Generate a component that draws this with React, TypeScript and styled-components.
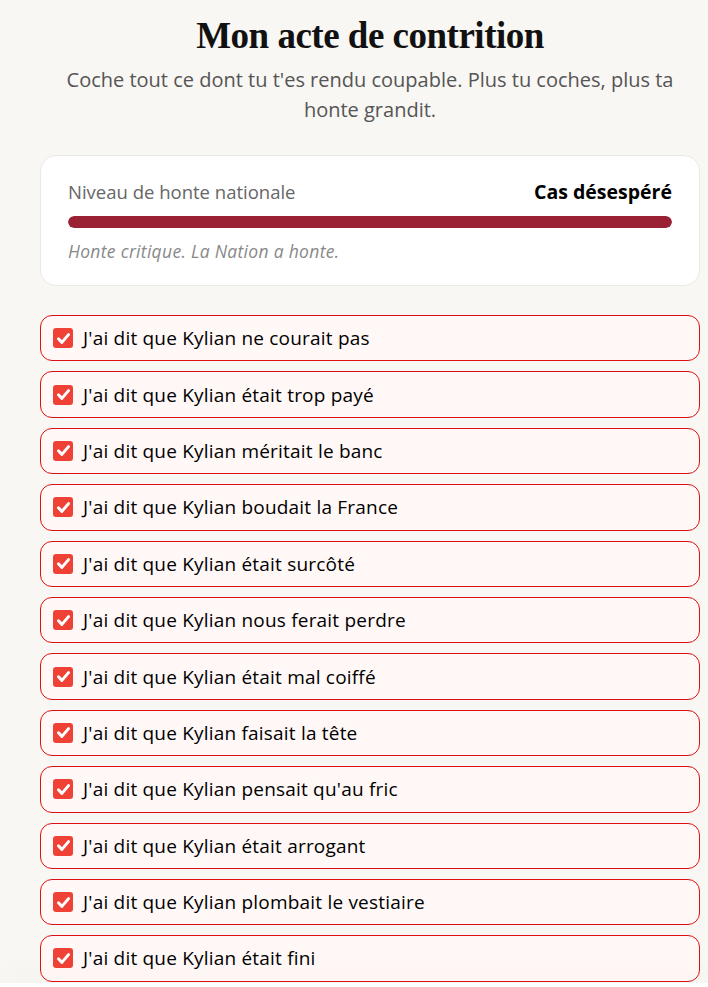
import React from "react";
import styled, { createGlobalStyle } from "styled-components";

const Global = createGlobalStyle`
  html, body { margin: 0; padding: 0; background: #f8f7f4; }
  body { font-family: "Open Sans", "Noto Sans", sans-serif; }
`;

const Page = styled.div`
  width: 660px;
  margin-left: 40px;
  padding-top: 14px;
  padding-bottom: 40px;
  display: flex;
  flex-direction: column;
`;

const Title = styled.h1`
  margin: 0;
  text-align: center;
  font-family: "Liberation Serif", "DejaVu Serif", serif;
  font-weight: 700;
  font-size: 37px;
  line-height: 44px;
  color: #111;
  letter-spacing: -0.5px;
`;

const Subtitle = styled.p`
  margin: 7px 0 0;
  text-align: center;
  font-size: 20px;
  line-height: 30px;
  color: #555;
  padding: 0 20px;
`;

const Card = styled.section`
  margin-top: 30px;
  background: #fff;
  border: 1px solid #ebe9e6;
  border-radius: 16px;
  padding: 22px 27px 22px 27px;
  display: flex;
  flex-direction: column;
`;

const CardHeader = styled.div`
  display: flex;
  justify-content: space-between;
  align-items: baseline;
`;

const Label = styled.span`
  font-size: 18.5px;
  color: #666;
`;

const Verdict = styled.span`
  font-size: 19.5px;
  font-weight: 700;
  color: #000;
`;

const Track = styled.div`
  margin-top: 11px;
  height: 12px;
  border-radius: 6px;
  background: #eee;
  overflow: hidden;
`;

const Fill = styled.div`
  height: 100%;
  background: #9a2133;
  border-radius: 6px;
`;

const Note = styled.p`
  margin: 11px 0 0;
  font-size: 17.5px;
  letter-spacing: 0.3px;
  font-style: italic;
  color: #888;
`;

const List = styled.ul`
  list-style: none;
  margin: 29px 0 0;
  padding: 0;
  display: flex;
  flex-direction: column;
  gap: 10px;
`;

const Item = styled.li`
  display: flex;
  align-items: center;
  gap: 10px;
  height: 46.4px;
  box-sizing: border-box;
  padding: 0 12px;
  border: 1.3px solid #dd1111;
  border-radius: 12px;
  background: #fff8f7;
  font-size: 19px;
  letter-spacing: 0.2px;
  color: #000;
`;

const Box = styled.span`
  width: 20px;
  height: 20px;
  border-radius: 3px;
  background: #ef4136;
  display: flex;
  align-items: center;
  justify-content: center;
  flex-shrink: 0;
`;

const BottomShade = styled.div`
  position: fixed;
  left: 0;
  right: 0;
  bottom: 0;
  height: 4px;
  background: #fff;
  box-shadow: 0 -8px 24px rgba(0, 0, 0, 0.07);
  pointer-events: none;
`;

const items = [
  "J'ai dit que Kylian ne courait pas",
  "J'ai dit que Kylian était trop payé",
  "J'ai dit que Kylian méritait le banc",
  "J'ai dit que Kylian boudait la France",
  "J'ai dit que Kylian était surcôté",
  "J'ai dit que Kylian nous ferait perdre",
  "J'ai dit que Kylian était mal coiffé",
  "J'ai dit que Kylian faisait la tête",
  "J'ai dit que Kylian pensait qu'au fric",
  "J'ai dit que Kylian était arrogant",
  "J'ai dit que Kylian plombait le vestiaire",
  "J'ai dit que Kylian était fini",
];

const Check = () => (
  <svg width="15" height="15" viewBox="0 0 14 14">
    <path d="M2.3 7.3 L5.5 10.6 L11.7 3.4" fill="none" stroke="#fff" strokeWidth="2.8" strokeLinecap="round" strokeLinejoin="round" />
  </svg>
);

export default function App() {
  const level = 100;
  return (
    <>
      <Global />
      <Page>
        <Title>Mon acte de contrition</Title>
        <Subtitle>
          Coche tout ce dont tu t'es rendu coupable. Plus tu coches, plus ta honte grandit.
        </Subtitle>
        <Card>
          <CardHeader>
            <Label>Niveau de honte nationale</Label>
            <Verdict>Cas désespéré</Verdict>
          </CardHeader>
          <Track>
            <Fill style={{ width: `${level}%` }} />
          </Track>
          <Note>Honte critique. La Nation a honte.</Note>
        </Card>
        <List>
          {items.map((t) => (
            <Item key={t}>
              <Box>
                <Check />
              </Box>
              {t}
            </Item>
          ))}
        </List>
      </Page>
      <BottomShade />
    </>
  );
}
